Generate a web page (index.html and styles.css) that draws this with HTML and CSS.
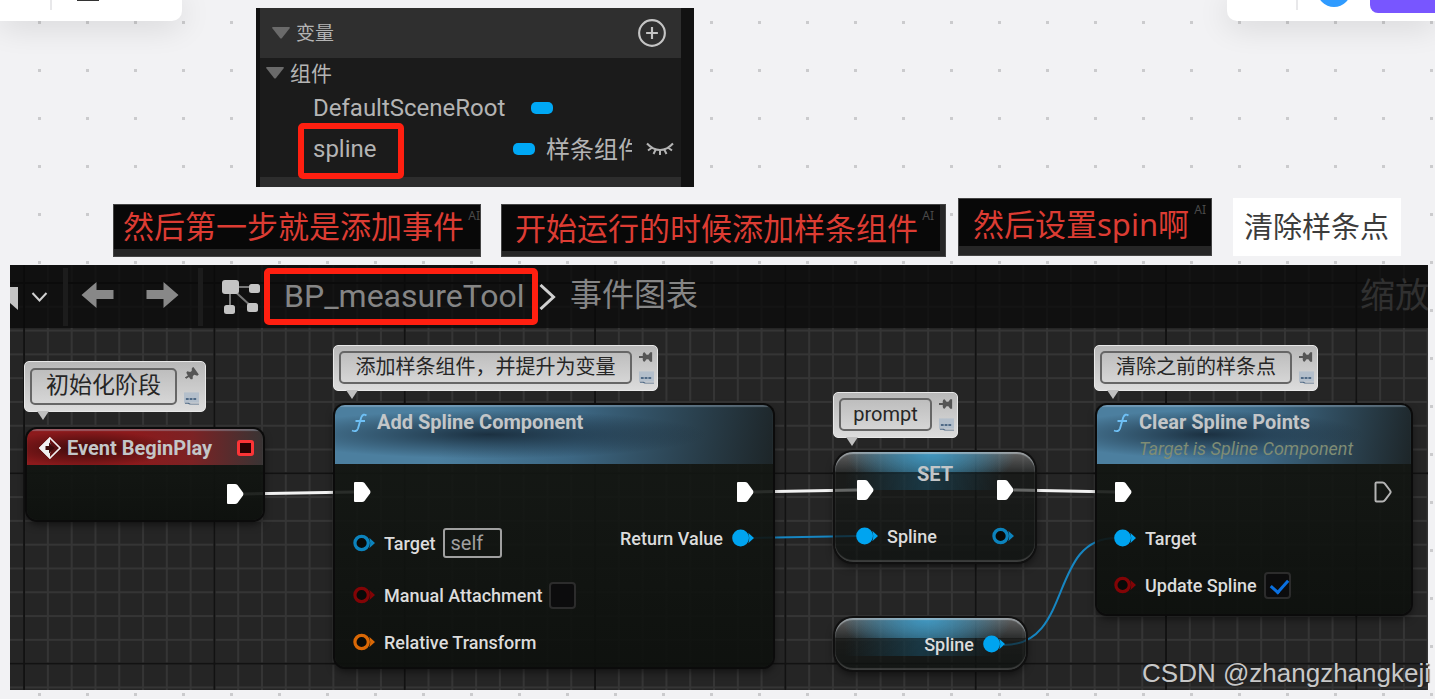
FILE: index.html
```html
<!DOCTYPE html>
<html lang="zh-CN">
<head>
<meta charset="utf-8">
<meta name="viewport" content="width=device-width, initial-scale=1">
<title>BP_measureTool</title>
<link rel="stylesheet" href="styles.css">
</head>
<body>
<svg class="defs" width="0" height="0" aria-hidden="true">
  <defs>
    <symbol id="exec" viewBox="0 0 18 22"><path d="M1 2Q1 1 2 1H9Q10.500 1 11.500 2L17 9.500Q18 11 17 12.500L11.500 20Q10.500 21 9 21H2Q1 21 1 20Z"/></symbol>
    <symbol id="exec-open" viewBox="0 0 18 22"><path d="M2.500 1.500H8.500Q10 1.500 11 2.800L16 9.500Q17.200 11 16 12.500L11 19.200Q10 20.500 8.500 20.500H2.500Q1.500 20.500 1.500 19.500V2.500Q1.500 1.500 2.500 1.500Z" fill="none" stroke="#b4b4b4" stroke-width="2"/></symbol>
    <symbol id="pin" viewBox="0 0 23 18"><circle cx="9" cy="9" r="8.800"/><path d="M17 3.500L23 9L17 14.500Q19 9 17 3.500Z"/></symbol>
    <symbol id="pin-open" viewBox="0 0 23 18"><circle cx="9" cy="9" r="7" fill="#080a08" stroke="currentColor" stroke-width="3.400"/><path d="M17 3.500L23 9L17 14.500Q19 9 17 3.500Z"/></symbol>
    <symbol id="pushpin" viewBox="0 0 16 12"><path d="M0 5H4V3Q4 1 6 1L8 3.500H10L12 1H14V11H12L10 8.500H8L6 11Q4 11 4 9V7H0Z"/></symbol>
    <symbol id="bubble" viewBox="0 0 16 13"><path fill="#b4bfcb" d="M0 0H16V11H0Z"/><path fill="#506a86" d="M2 6h3v2H2zM6 6h3v2H6zM10 6h3v2h-3zM1 11h4l2 1h9v1H6L4 12H1z"/></symbol>
    <symbol id="func" viewBox="0 0 16 20"><path d="M15.500 2.500Q12 0 10.200 4.500L7 15.500Q5.500 19.500 1 17.500M4.500 8H14" fill="none" stroke="#6fc0f5" stroke-width="1.900"/></symbol>
  </defs>
</svg>

<main class="board">
  <div class="toolbar toolbar-left">
    <span class="toolbar-rule"></span>
    <span class="toolbar-glyph"></span>
  </div>
  <div class="toolbar toolbar-right">
    <span class="toolbar-rule"></span>
    <span class="avatar"></span>
    <button class="share" type="button" aria-label="Share"></button>
  </div>

  <section class="variables">
    <header class="var-header">
      <svg class="caret" viewBox="0 0 18 12"><path d="M1 0H17Q18.500 0 17.500 1.500L10 11Q9 12 8 11L.500 1.500Q-.500 0 1 0Z"/></svg>
      <h2 class="var-title">变量</h2>
      <button class="add" type="button" aria-label="Add">
        <svg viewBox="0 0 28 28"><circle cx="14" cy="14" r="12"/><path d="M14 8.500V19.500M8.500 14H19.500"/></svg>
      </button>
    </header>
    <div class="var-body">
      <div class="var-group">
        <svg class="caret" viewBox="0 0 18 12"><path d="M1 0H17Q18.500 0 17.500 1.500L10 11Q9 12 8 11L.500 1.500Q-.500 0 1 0Z"/></svg>
        <h3 class="group-title">组件</h3>
      </div>
      <div class="var-row"><span class="var-name">DefaultSceneRoot</span><span class="pill"></span></div>
      <div class="var-row var-row-spline">
        <span class="var-name">spline</span><span class="pill"></span><span class="var-type">样条组件</span>
        <svg class="eye" viewBox="0 0 28 14"><path d="M1 1.500Q7 8 14 8T27 1.500M5.500 6L2 8.500M9.500 8L7.500 12M14 8.500V13M18.500 8L20.500 12M22.500 6L26 8.500"/></svg>
      </div>
    </div>
    <span class="mark mark-spline"></span>
  </section>

  <p class="caption caption-event">然后第一步就是添加事件<span class="ai">AI</span></p>
  <p class="caption caption-start">开始运行的时候添加样条组件<span class="ai">AI</span></p>
  <p class="caption caption-spin">然后设置spin啊<span class="ai">AI</span></p>
  <p class="caption caption-clear">清除样条点</p>

  <section class="graph">
    <svg class="grid" width="100%" height="100%" aria-hidden="true">
      <defs>
        <pattern id="minor" x="13.100" y="17" width="23.790" height="23.790" patternUnits="userSpaceOnUse"><path d="M0 1H24M1 0V24" stroke="#353535" stroke-width="2"/></pattern>
        <pattern id="major" x="13.100" y="17" width="190.320" height="190.320" patternUnits="userSpaceOnUse"><path d="M0 1H191M1 0V191" stroke="#121212" stroke-width="2"/></pattern>
      </defs>
      <rect width="100%" height="100%" fill="#252525"/>
      <rect width="100%" height="100%" fill="url(#minor)"/>
      <rect width="100%" height="100%" fill="url(#major)"/>
    </svg>

    <header class="graph-bar">
      <svg class="flag" viewBox="0 0 9 26"><path d="M0 3L8 3V26L0 19Z"/></svg>
      <button class="tool drop" type="button" aria-label="Menu"><svg viewBox="0 0 16 10"><path d="M1 1L8 8.500L15 1"/></svg></button>
      <span class="rule"></span>
      <button class="tool" type="button" aria-label="Back"><svg class="arrow" viewBox="0 0 32 26"><path d="M0 13L15 0V8H32V17H15V26Z"/></svg></button>
      <button class="tool" type="button" aria-label="Forward"><svg class="arrow" viewBox="0 0 32 26"><path d="M32 13L17 0V8H0V17H17V26Z"/></svg></button>
      <span class="rule"></span>
      <svg class="nodes" viewBox="0 0 38 34"><path d="M8 7H32M8 7V29M8 7L30 27" stroke="#777" stroke-width="2" fill="none"/><g fill="#c4c4c4"><rect width="17" height="14" rx="3"/><rect x="27" y="4" width="11" height="9" rx="2.500"/><rect x="25" y="23" width="11" height="9" rx="2.500"/><rect x="2" y="25" width="11" height="9" rx="2.500"/></g></svg>
      <a class="crumb crumb-marked" href="#">BP_measureTool</a>
      <svg class="sep" viewBox="0 0 16 26"><path d="M1 1L14 13L1 25"/></svg>
      <span class="crumb-current">事件图表</span>
      <span class="zoom">缩放</span>
    </header>

    <svg class="wires" viewBox="10 265 1418 425" width="1418" height="425" aria-hidden="true">
      <g fill="none" stroke="#f2f2f2" stroke-width="3"><path d="M244 494L354 492"/><path d="M754 492L857 490"/><path d="M1014 490L1115 492"/></g>
      <g fill="none" stroke="#1786c2" stroke-width="2"><path d="M752 538L857 536"/><path d="M1004 645C1074 645 1048 538 1116 538"/></g>
    </svg>

    <div class="note note-init"><span class="note-text">初始化阶段</span><span class="note-tools"><svg class="pushpin tilt" aria-hidden="true"><use href="#pushpin"/></svg><svg class="bubble"><use href="#bubble"/></svg></span></div>
    <div class="note note-add"><span class="note-text">添加样条组件，并提升为变量</span><span class="note-tools"><svg class="pushpin"><use href="#pushpin"/></svg><svg class="bubble"><use href="#bubble"/></svg></span></div>
    <div class="note note-prompt"><span class="note-text">prompt</span><span class="note-tools"><svg class="pushpin"><use href="#pushpin"/></svg><svg class="bubble"><use href="#bubble"/></svg></span></div>
    <div class="note note-clear"><span class="note-text">清除之前的样条点</span><span class="note-tools"><svg class="pushpin"><use href="#pushpin"/></svg><svg class="bubble"><use href="#bubble"/></svg></span></div>

    <article class="node node-event">
      <header class="node-head head-event">
        <svg class="diamond" viewBox="0 0 22 22"><path d="M11 0L0 11L11 22V16L14 11L11 6Z" fill="#f0f0f0"/><path d="M6.500 9H10V5.500L15.500 11L10 16.500V13H6.500Z" fill="#3c0b0b"/><path d="M11 1L21 11L11 21L1 11Z" fill="none" stroke="#f0f0f0" stroke-width="1.600"/></svg>
        <h3 class="node-title">Event BeginPlay</h3>
        <span class="delegate"></span>
      </header>
      <div class="pins pins-event"><div class="col col-right"><span class="pin-row exec-row"><svg class="exec"><use href="#exec"/></svg></span></div></div>
    </article>

    <article class="node node-add">
      <header class="node-head head-func">
        <svg class="func"><use href="#func"/></svg>
        <div><h3 class="node-title">Add Spline Component</h3></div>
      </header>
      <div class="pins">
        <div class="col">
          <span class="pin-row exec-row"><svg class="exec"><use href="#exec"/></svg></span>
          <label class="pin-row input-row"><svg class="pin ring-blue"><use href="#pin-open"/></svg>Target<input class="self" type="text" value="self"></label>
          <label class="pin-row check-row"><svg class="pin ring-red"><use href="#pin-open"/></svg>Manual Attachment<input class="check" type="checkbox"></label>
          <span class="pin-row"><svg class="pin ring-orange"><use href="#pin-open"/></svg>Relative Transform</span>
        </div>
        <div class="col col-right">
          <span class="pin-row exec-row"><svg class="exec"><use href="#exec"/></svg></span>
          <span class="pin-row">Return Value<svg class="pin solid"><use href="#pin"/></svg></span>
        </div>
      </div>
    </article>

    <article class="node glass node-set">
      <h3 class="node-title glass-title">SET</h3>
      <div class="pins">
        <div class="col">
          <span class="pin-row exec-row"><svg class="exec"><use href="#exec"/></svg></span>
          <span class="pin-row"><svg class="pin solid"><use href="#pin"/></svg>Spline</span>
        </div>
        <div class="col col-right">
          <span class="pin-row exec-row"><svg class="exec"><use href="#exec"/></svg></span>
          <span class="pin-row"><svg class="pin ring-blue"><use href="#pin-open"/></svg></span>
        </div>
      </div>
    </article>

    <article class="node glass node-get"><span class="pin-row">Spline<svg class="pin solid"><use href="#pin"/></svg></span></article>

    <article class="node node-clear">
      <header class="node-head head-func">
        <svg class="func"><use href="#func"/></svg>
        <div><h3 class="node-title">Clear Spline Points</h3><p class="node-sub">Target is Spline Component</p></div>
      </header>
      <div class="pins">
        <div class="col">
          <span class="pin-row exec-row"><svg class="exec"><use href="#exec"/></svg></span>
          <span class="pin-row"><svg class="pin solid"><use href="#pin"/></svg>Target</span>
          <label class="pin-row check-row"><svg class="pin ring-red"><use href="#pin-open"/></svg>Update Spline<input class="check" type="checkbox" checked></label>
        </div>
        <div class="col col-right"><span class="pin-row exec-row"><svg class="exec"><use href="#exec-open"/></svg></span></div>
      </div>
    </article>
  </section>

  <p class="watermark">CSDN @zhangzhangkeji</p>
</main>
</body>
</html>
```
FILE: styles.css
```css
* { box-sizing: border-box; }
body {
  margin: 0;
  font-family: Roboto, "Noto Sans CJK SC", sans-serif;
  color: #dcdcdc;
}
h2, h3, p { margin: 0; font-weight: 400; }
button { padding: 0; border: 0; background: none; color: inherit; }
svg { display: block; flex: none; }
.defs { position: absolute; }

/* Whiteboard */
.board {
  position: relative;
  min-height: 100vh;
  overflow: hidden;
  background-color: #f2f2f4;
  background-image: linear-gradient(#f2f2f4 45px, transparent 45px), linear-gradient(90deg, #f2f2f4 45px, #cbcbcd 45px);
  background-size: 48px 48px;
  background-position: 41px 24px;
}
.toolbar {
  position: absolute;
  top: 0;
  display: flex;
  align-items: flex-start;
  height: 21px;
  background: #fff;
  box-shadow: 0 4px 32px rgba(0, 0, 0, .14);
}
.toolbar-left { left: 0; width: 182px; padding-left: 50px; gap: 25px; border-radius: 0 0 10px 0; }
.toolbar-right { right: 0; width: 208px; padding-left: 69px; border-radius: 0 0 0 10px; }
.toolbar-rule { width: 2px; height: 10px; background: #e8e8ea; }
.toolbar-glyph { width: 22px; height: 1px; background: #333; }
.avatar { width: 34px; height: 34px; margin: -27px 19px 0 19px; border-radius: 50%; background: #2f9bff; }
.share { flex: 1; height: 13px; border-radius: 0 0 0 8px; background: #7856ff; }

/* Variables panel */
.variables {
  position: absolute;
  left: 256px;
  top: 8px;
  width: 438px;
  border: solid #121212;
  border-width: 0 13px 0 4px;
  background: #1b1b1b;
}
.var-header {
  display: flex;
  align-items: center;
  gap: 6px;
  height: 50px;
  padding: 0 14px 0 12px;
  background: #2f2f2f;
}
.caret { width: 18px; height: 12px; fill: #6a6a6a; }
.var-title { padding-bottom: 4px; font-size: 19px; color: #b4b4b4; }
.add { margin-left: auto; }
.add svg { width: 30px; height: 30px; fill: none; stroke: #c4c4c4; stroke-width: 2; }
.var-body { height: 129px; border-bottom: 10px solid #2d2d2d; color: #b4b4b4; }
.var-group { display: flex; align-items: center; gap: 6px; height: 30px; padding-left: 6px; }
.group-title { padding-top: 2px; font-size: 21px; line-height: 30px; }
.var-row { display: flex; align-items: center; height: 40px; padding-left: 53px; font-size: 24px; }
.var-row-spline { height: 42px; }
.pill { width: 22px; height: 12px; border-radius: 5px; background: #00a8f5; }
.var-row .pill { margin-left: 26px; }
.var-row-spline .pill { margin: 0 11px 0 auto; }
.var-type { width: 86px; padding-bottom: 4px; overflow: hidden; white-space: nowrap; }
.eye { width: 28px; height: 14px; margin: 0 7px 0 14px; fill: none; stroke: #b4b4b4; stroke-width: 2; }
.mark { border: 6px solid #ff1f10; border-radius: 5px; }
.mark-spline { position: absolute; left: 38px; top: 115px; width: 106px; height: 56px; }

/* Captions */
.caption {
  position: absolute;
  height: 53px;
  padding-left: 9px;
  border: 1px solid #444;
  background: linear-gradient(#080808 44px, #262626 44px);
  color: #dc3c33;
  font-family: "Noto Sans", "Noto Sans CJK SC", sans-serif;
  font-size: 31px;
  font-weight: 400;
  line-height: 42px;
  white-space: nowrap;
}
.caption-event { left: 113px; top: 204px; width: 368px; }
.caption-start {
  left: 501px; top: 204px; width: 445px; padding-left: 13px; line-height: 46px;
  background: linear-gradient(#080808 0 0) 0 0 / 438px 46px no-repeat #262626;
}
.caption-spin { left: 958px; top: 198px; width: 254px; height: 58px; padding-left: 14px; background: linear-gradient(#080808 47px, #262626 47px); line-height: 50px; }
.caption-clear {
  left: 1233px; top: 198px; width: 168px; height: 58px; padding-left: 10px;
  border-color: #fff; background: #fff; color: #3c3c3c; font-size: 29px; line-height: 56px;
}
.ai { position: absolute; right: 5px; top: 4px; color: #4a4a4a; font-size: 12px; line-height: 14px; }
.caption-start .ai { right: 11px; }
.caption-event .ai { right: 0; }

/* Graph */
.graph { position: absolute; left: 10px; top: 265px; width: 1418px; height: 425px; overflow: hidden; }
.grid, .wires { position: absolute; left: 0; top: 0; }
.graph-bar {
  position: relative;
  display: flex;
  align-items: center;
  height: 63px;
  background: rgba(10, 10, 10, .75);
}
.flag { width: 9px; height: 26px; fill: #c4c4c4; }
.tool svg { fill: #888; }
.tool .arrow { margin: 0 19px 4px 13px; }
.drop { margin: 0 15px 0 12px; }
.tool.drop svg { width: 17px; height: 10px; fill: none; stroke: #d0d0d0; stroke-width: 2; }
.rule { width: 5px; height: 58px; background: #1c1c1c; }
.arrow { width: 33px; height: 26px; }
.nodes { width: 38px; height: 34px; margin: 0 4px 0 19px; }
.crumb, .crumb-current { color: #858585; font-size: 32px; line-height: 44px; text-decoration: none; white-space: nowrap; }
.crumb-marked { width: 274px; height: 57px; padding-left: 14px; border: 6px solid #ff1f10; border-radius: 5px; }
.sep { width: 17px; height: 26px; margin: 0 14px 0 1px; fill: none; stroke: #d0d0d0; stroke-width: 3; }
.crumb-current { padding-bottom: 4px; }
.zoom { width: 68px; margin-left: auto; overflow: hidden; color: #303030; font-size: 35px; line-height: 56px; white-space: nowrap; }

/* Comment bubbles */
.note {
  position: absolute;
  display: flex;
  gap: 7px;
  height: 46px;
  padding: 5px 2px 6px 5px;
  border: 1px solid #e8e8e8;
  border-radius: 5px;
  background: linear-gradient(#b8b8b8, #dcdcdc);
  color: #262626;
  font-size: 20px;
}
.note::after {
  content: "";
  position: absolute;
  left: 12px;
  top: 100%;
  border: solid transparent;
  border-width: 9px 6px 0;
  border-top-color: #c0c0c0;
}
.note-text {
  flex: 1;
  border: 2px solid #666;
  border-radius: 5px;
  line-height: 29px;
  text-align: center;
  white-space: nowrap;
}
.note-tools { display: flex; flex-direction: column; justify-content: space-between; width: 16px; }
.pushpin { width: 15px; height: 12px; fill: #555; }
.tilt { rotate: -35deg; }
.bubble { width: 15px; height: 13px; }
.note-init { left: 14px; top: 96px; width: 182px; height: 51px; padding: 6px 5px; font-size: 23px; }
.note-init .note-text { line-height: 32px; }
.note-add { left: 323px; top: 80px; width: 325px; }
.note-prompt { left: 823px; top: 127px; width: 125px; }
.note-clear { left: 1084px; top: 80px; width: 224px; }

/* Nodes */
.node {
  position: absolute;
  overflow: hidden;
  border-radius: 10px;
  background: linear-gradient(rgba(20, 24, 20, .88), rgba(13, 16, 13, .93));
  box-shadow: 0 0 0 2px #0b0b0b, 0 4px 8px rgba(0, 0, 0, .6);
  font-size: 18px;
  font-weight: 500;
}
.node-event { left: 17px; top: 164px; width: 236px; height: 91px; }
.node-add { left: 325px; top: 140px; width: 438px; height: 262px; }
.node-clear { left: 1087px; top: 140px; width: 314px; height: 209px; }
.node-head { display: flex; box-shadow: inset 0 2px 1px rgba(180, 200, 220, .35); }
.head-event {
  align-items: center;
  gap: 6px;
  height: 36px;
  padding: 2px 9px 0 12px;
  background: radial-gradient(ellipse 90px 18px at 60px 55%, rgba(30, 5, 5, .75), transparent), linear-gradient(90deg, #8c1a1c 45%, #7c2224 70%, #383434);
}
.head-func {
  gap: 10px;
  height: 59px;
  padding: 5px 0 0 16px;
  background: radial-gradient(ellipse 50% 24px at 35% 50%, rgba(20, 36, 50, .85), transparent), linear-gradient(100deg, #4c7f9f 25%, #3c6682 55%, #1d2528);
}
.node-title { color: #c3c6c8; font-size: 20px; font-weight: 700; line-height: 24px; white-space: nowrap; }
.node-sub { color: #7f8c74; font-size: 18px; font-style: italic; line-height: 29px; white-space: nowrap; }
.diamond { width: 22px; height: 22px; }
.func { width: 16px; height: 20px; margin-top: 3px; }
.delegate { width: 17px; height: 16px; margin-left: auto; border: 3px solid #fb3436; border-radius: 3px; background: #290202; }
.pins { display: flex; justify-content: space-between; padding: 14px 19px 0 17px; }
.col { display: flex; flex-direction: column; gap: 20px; }
.col-right { align-items: flex-end; }
.pin-row { display: flex; align-items: center; gap: 9px; height: 24px; color: #dcdcdc; white-space: nowrap; }
.exec-row { height: 28px; }
.input-row { height: 34px; }
.check-row { height: 30px; }
.exec { width: 18px; height: 22px; fill: #fff; }
.pins-event { justify-content: flex-end; padding-top: 15px; }
.node-add .pins { padding-left: 18px; }
.pin { width: 22px; height: 18px; fill: currentColor; }
.solid { color: #00a4f0; }
.ring-blue { color: #0c83bd; }
.ring-red { color: #820406; }
.ring-orange { color: #d96806; }
.self {
  width: 59px; height: 30px; padding: 0 6px; border: 2px solid #a0a0a0; border-radius: 3px;
  background: transparent; color: #a0a0a0; font: inherit; font-size: 20px; font-weight: 400;
}
.self, .check { margin: 0 0 0 -2px; }
.check { appearance: none; width: 27px; height: 27px; border: 2px solid #2c2c2c; border-radius: 4px; background: #0c0c0d; }
.check:checked::after {
  content: "";
  display: block;
  width: 8px;
  height: 14px;
  margin: 2px 0 0 8px;
  border: solid #0a70e0;
  border-width: 0 3px 3px 0;
  rotate: 42deg;
}

/* Variable nodes */
.glass {
  border-radius: 18px;
  background:
    radial-gradient(ellipse 85px 44px at 48% 0, rgba(66, 160, 205, .9), transparent) 0 0 / 100% 20px no-repeat,
    linear-gradient(90deg, transparent 5%, rgba(26, 84, 110, .5) 45%, transparent 85%) 0 0 / 100% 38px no-repeat,
    linear-gradient(rgba(130, 130, 130, .65), rgba(50, 54, 54, .5) 20px, rgba(20, 22, 20, .6) 20px, rgba(14, 18, 16, .75));
  box-shadow: inset 0 2px 1px rgba(200, 210, 215, .55), inset 0 -2px 1px rgba(120, 120, 120, .4), 0 0 0 2px #101010, 0 4px 8px rgba(0, 0, 0, .6);
}
.node-set { left: 825px; top: 187px; width: 200px; height: 110px; }
.node-get { left: 825px; top: 353px; width: 191px; height: 52px; padding: 14px 21px 0 0; }
.glass-title { height: 24px; padding-top: 10px; text-align: center; }
.node-set .pins { padding: 0 21px 0 21px; }
.node-get .pin-row { justify-content: flex-end; }

.watermark {
  position: absolute;
  right: 5px;
  bottom: 8px;
  color: #c8c8c8;
  font-family: "Liberation Sans", sans-serif;
  font-size: 26px;
  line-height: 36px;
  text-shadow: 1px 1px 1px #222;
}
```
